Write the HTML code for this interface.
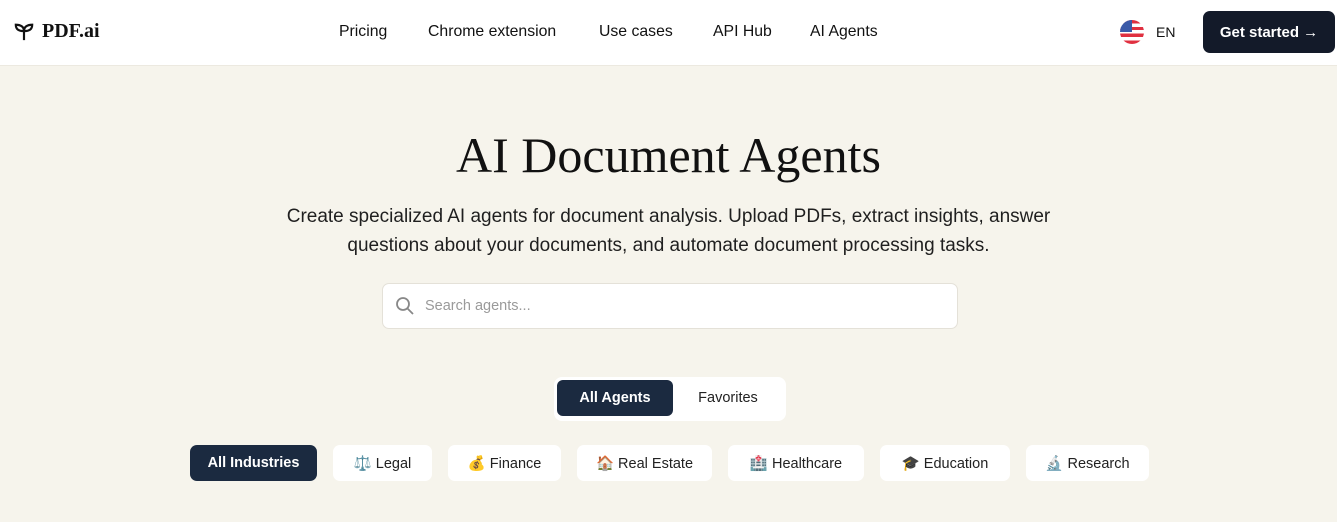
<!DOCTYPE html>
<html><head><meta charset="utf-8"><style>
*{margin:0;padding:0;box-sizing:border-box}
body{width:1337px;height:522px;overflow:hidden;background:#f6f4ec;font-family:"Liberation Sans",sans-serif;color:#111}
.hdr{height:66px;background:#fff;border-bottom:1px solid #ece9e0;position:relative}
.logo{position:absolute;left:13px;top:20px;display:flex;align-items:center;gap:7px;font-family:"Liberation Serif",serif;font-size:20px;font-weight:bold}
.nav{position:absolute;top:0;height:64px;display:flex;align-items:center;font-size:15.8px;color:#111}
.en{position:absolute;left:1120px;top:0;height:64px;display:flex;align-items:center;gap:12px;font-size:14px}
.flag{width:24px;height:24px;border-radius:50%;background:repeating-linear-gradient(#e03040 0 3.4px,#fff 3.4px 6.8px);position:relative;overflow:hidden}
.flag:before{content:"";position:absolute;left:0;top:0;width:12px;height:12px;background:#3b5aa8}
.btn{position:absolute;left:1203px;top:11px;width:132px;height:42px;background:#131a29;color:#fff;border-radius:7px;font-size:15px;font-weight:bold;display:flex;align-items:center;justify-content:center}
h1{position:absolute;top:126px;width:100%;text-align:center;font-family:"Liberation Serif",serif;font-weight:normal;font-size:50px;color:#111}
.sub{position:absolute;top:202px;width:100%;text-align:center;font-size:19px;line-height:29px;color:#1f1f1f}
.search{position:absolute;left:382px;top:283px;width:576px;height:46px;background:#fff;border:1px solid #e4e1d8;border-radius:7px;display:flex;align-items:center;padding-left:12px;gap:10px;color:#9a9a9a;font-size:14.5px}
.tabs{position:absolute;left:554px;top:377px;width:232px;height:44px;background:#fff;border-radius:8px;padding:3px;display:flex}
.tabs div{height:36px;display:flex;align-items:center;justify-content:center;font-size:14.5px;border-radius:6px}
.chip{position:absolute;top:445px;height:36px;background:#fff;border-radius:7px;display:flex;align-items:center;justify-content:center;font-size:14.5px;color:#222;gap:5px}
.chip.a{background:#1b2a40;color:#fff;font-weight:bold}
</style></head><body>
<div class="hdr">
<div class="logo"><svg width="22" height="20" viewBox="0 0 24 22" fill="none" stroke="#111" stroke-width="2.4"><path d="M12 20V10M12 10C12 5 8 3 3 3C3 8 6 10 12 10M12 10C12 5 16 3 21 3C21 8 18 10 12 10"/></svg>PDF.ai</div>
<div class="nav" style="left:339px">Pricing</div>
<div class="nav" style="left:428px">Chrome extension</div>
<div class="nav" style="left:599px">Use cases</div>
<div class="nav" style="left:713px">API Hub</div>
<div class="nav" style="left:810px">AI Agents</div>
<div class="en"><div class="flag"></div>EN</div>
<div class="btn">Get started →</div>
</div>
<h1>AI Document Agents</h1>
<div class="sub">Create specialized AI agents for document analysis. Upload PDFs, extract insights, answer<br>questions about your documents, and automate document processing tasks.</div>
<div class="search"><svg width="20" height="20" viewBox="0 0 20 20" fill="none" stroke="#888" stroke-width="1.8"><circle cx="8" cy="8" r="6"/><path d="M12.5 12.5L18 18"/></svg>Search agents...</div>
<div class="tabs"><div style="width:116px;background:#1b2a40;color:#fff;font-weight:bold">All Agents</div><div style="width:110px;color:#222">Favorites</div></div>
<div class="chip a" style="left:190px;width:127px">All Industries</div>
<div class="chip" style="left:333px;width:99px">⚖️ Legal</div>
<div class="chip" style="left:448px;width:113px">💰 Finance</div>
<div class="chip" style="left:577px;width:135px">🏠 Real Estate</div>
<div class="chip" style="left:728px;width:136px">🏥 Healthcare</div>
<div class="chip" style="left:880px;width:130px">🎓 Education</div>
<div class="chip" style="left:1026px;width:123px">🔬 Research</div>
</body></html>
